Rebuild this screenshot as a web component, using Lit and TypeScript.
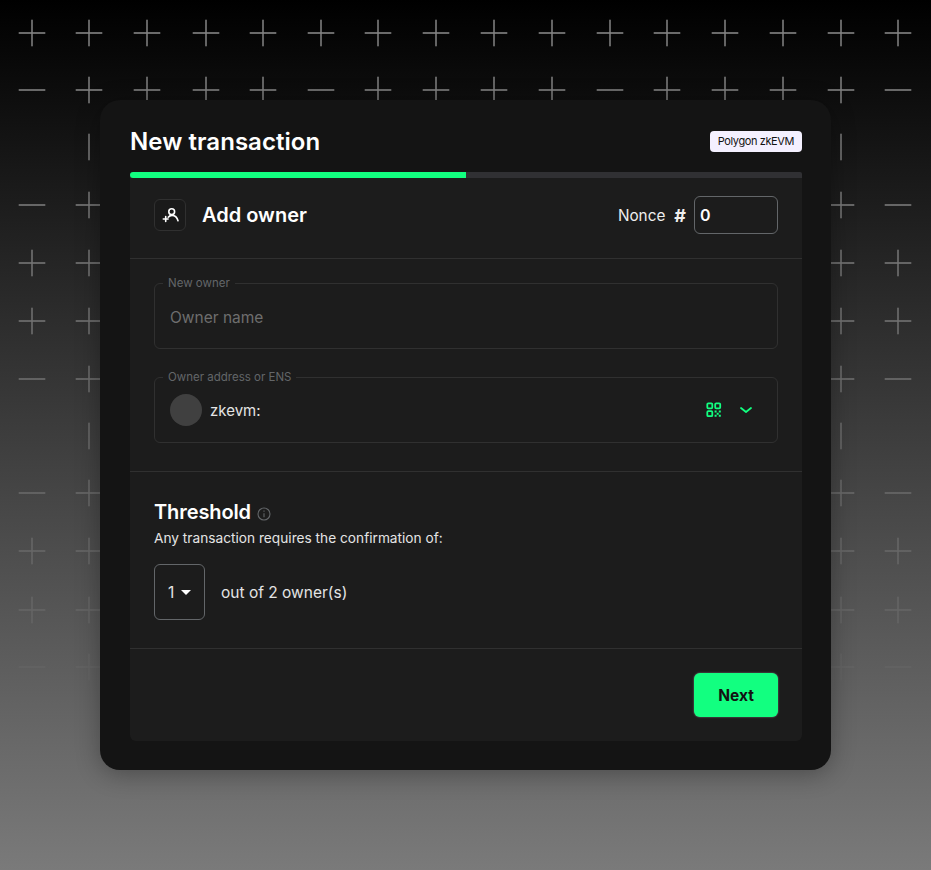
import { LitElement, html, css, svg } from "lit";
import { customElement } from "lit/decorators.js";

const COLS = [32, 89, 147, 206, 263, 321, 378, 436, 494, 552, 610, 667, 725, 783, 841, 898];
const ROWS = [33, 90, 147, 205, 263, 321, 379, 436, 493, 551, 610, 667];
// p = plus, m = horizontal, v = vertical, anything else = nothing, per row
const PATTERN = [
  "pppppppppppppppp",
  "mppppmppppmppppm",
  "nv............vn",
  "mp............pm",
  "pp............pp",
  "pp............pp",
  "mp............pm",
  "nv............vn",
  "mp............pm",
  "pp............pp",
  "pp............pp",
  "mp............pm",
];

@customElement("app-root")
export class AppRoot extends LitElement {
  static styles = css`
    :host {
      display: block;
      position: relative;
      width: 931px;
      height: 870px;
      overflow: hidden;
      background: linear-gradient(180deg, #000 0%, #7a7a7a 100%);
      font-family: "Inter", "Open Sans", sans-serif;
      color: #fff;
    }
    .grid { position: absolute; inset: 0; }
    .page { position: relative; padding: 100px; display: flex; box-sizing: border-box; height: 870px; }
    .card {
      width: 731px; height: 670px; margin-right: -100px; box-sizing: border-box;
      background: #141414; border-radius: 20px; padding: 0 29px 29px 30px;
      box-shadow: 0 4px 24px rgba(0, 0, 0, 0.3);
      display: flex; flex-direction: column;
    }
    .head { height: 72px; flex: none; display: flex; align-items: center; justify-content: space-between; padding-top: 10px; box-sizing: border-box; }
    h1 { margin: 0; font-size: 24px; font-weight: 600; letter-spacing: 0.05px; }
    .chip { background: #f4f0ff; color: #121312; font-size: 11px; letter-spacing: -0.4px; line-height: 21px; height: 21px; padding: 0 8px; border-radius: 4px; }
    .track { height: 6px; flex: none; background: #303033; border-radius: 6px 2px 0 0; }
    .fill { height: 6px; width: 50%; background: #12ff80; border-radius: 6px 0 0 6px; }
    .panel { flex: 1; background: #1c1c1c; border-radius: 0 0 6px 6px; display: flex; flex-direction: column; }
    .row { height: 81px; box-sizing: border-box; border-bottom: 1px solid #303030; padding: 18px 24px 24px; display: flex; align-items: center; flex: none; }
    .ico { width: 32px; height: 32px; box-sizing: border-box; border: 1px solid #303030; border-radius: 6px; display: flex; align-items: center; justify-content: center; background: #1a1a1a; }
    h2 { margin: 0 0 0 16px; font-size: 20px; font-weight: 600; }
    .nonce { margin-left: auto; display: flex; align-items: center; font-size: 15.3px; color: #eee; }
    .hash { font-weight: 700; font-size: 18px; margin: 0 8px 0 9px; }
    .nonce-box { width: 84px; height: 38px; box-sizing: border-box; border: 1px solid #636669; border-radius: 6px; padding-left: 5px; font-weight: 600; font-size: 16px; line-height: 37px; color: #fff; }
    .fields { padding: 18px 24px 28px; border-bottom: 1px solid #303030; display: flex; flex-direction: column; gap: 22px; flex: none; }
    fieldset { margin: 0; padding: 0 15px; height: 72px; box-sizing: border-box; border: 1px solid #303030; border-radius: 6px; min-width: 0; }
    legend { font-size: 11.5px; line-height: 12px; color: #636669; padding: 0 5px; margin-left: -7px; }
    .inner { height: 54px; display: flex; align-items: center; }
    .ph { font-size: 15.5px; color: #6e6e6e; margin-top: 2px; }
    .avatar { width: 32px; height: 32px; border-radius: 50%; background: #404040; margin-right: 8px; }
    .prefix { font-size: 15px; color: #e4e4e4; }
    .qr { margin-left: auto; display: block; }
    .chev { margin-left: 16px; margin-right: 8px; display: block; }
    .thr { padding: 27px 24px 28px; border-bottom: 1px solid #303030; flex: none; }
    .t { display: flex; align-items: center; gap: 6px; font-size: 20px; letter-spacing: -0.1px; font-weight: 600; line-height: 26px; }
    .info { margin-top: 3px; display: block; }
    .sub { font-size: 13.7px; line-height: 20px; color: #e4e4e4; margin-top: 3px; }
    .sel-row { display: flex; align-items: center; margin-top: 16px; font-size: 15.5px; color: #e4e4e4; gap: 16px; }
    .sel { width: 51px; height: 56px; box-sizing: border-box; border: 1px solid #636669; border-radius: 6px; display: flex; align-items: center; padding-left: 13px; gap: 7px; }
    .caret { width: 0; height: 0; border-left: 5px solid transparent; border-right: 5px solid transparent; border-top: 5px solid #fff; }
    .foot { flex: 1; display: flex; justify-content: flex-end; align-items: flex-start; padding: 24px; }
    .next { width: 84px; height: 44px; border: none; box-shadow: 0 0 2px rgba(255, 255, 255, 0.45); border-radius: 6px; background: #12ff80; color: #121312; font: 700 15.5px "Inter", sans-serif; padding: 0; }
  `;

  private renderGrid() {
    const marks: unknown[] = [];
    ROWS.forEach((y, r) => {
      COLS.forEach((x, c) => {
        const k = PATTERN[r][c];
        if (k === "p" || k === "m") marks.push(svg`<rect x=${x - 13.3} y=${y - 0.8} width="26.6" height="1.6" />`);
        if (k === "p" || k === "v") marks.push(svg`<rect x=${x - 0.75} y=${y - 13.3} width="1.5" height="26.6" />`);
      });
    });
    return html`<svg class="grid" width="931" height="870">
      <defs>
        <linearGradient id="fade" gradientUnits="userSpaceOnUse" x1="0" y1="0" x2="0" y2="870">
          <stop offset="0" stop-color="#858585" />
          <stop offset="0.5" stop-color="#6a6a6a" />
          <stop offset="0.77" stop-color="#636363" />
        </linearGradient>
      </defs>
      <g fill="url(#fade)">${marks}</g>
    </svg>`;
  }

  render() {
    return html`
      ${this.renderGrid()}
      <div class="page">
        <section class="card">
          <header class="head"><h1>New transaction</h1><span class="chip">Polygon zkEVM</span></header>
          <div class="track"><div class="fill"></div></div>
          <div class="panel">
            <div class="row">
              <span class="ico">
                <svg width="20" height="20" viewBox="0 0 20 20" fill="none" stroke="#fff" stroke-width="1.6" stroke-linecap="round">
                  <circle cx="11.7" cy="6.7" r="2.9" />
                  <path d="M8.2 12.2C9.2 11 10.4 10.4 12 10.4c3 0 5.2 2.2 6 5.4" />
                  <path d="M3.3 14h4.8M5.7 11.6v4.8" />
                </svg>
              </span>
              <h2>Add owner</h2>
              <div class="nonce"><span>Nonce</span><span class="hash">#</span><div class="nonce-box">0</div></div>
            </div>
            <div class="fields">
              <fieldset><legend>New owner</legend><div class="inner"><span class="ph">Owner name</span></div></fieldset>
              <fieldset>
                <legend>Owner address or ENS</legend>
                <div class="inner">
                  <span class="avatar"></span><span class="prefix">zkevm:</span>
                  <svg class="qr" width="16" height="16" viewBox="0 0 16 16" fill="none" stroke="#12ff80" stroke-width="1.8">
                    <rect x="1.3" y="1.3" width="5" height="5" rx="1" />
                    <rect x="9.2" y="1.3" width="5" height="5" rx="1" />
                    <rect x="1.3" y="9.2" width="5" height="5" rx="1" />
                    <path d="M8.6 8.6h2v2h-2zM12.8 8.6h2v2h-2zM10.7 10.7h2v2h-2zM8.6 12.8h2v2h-2zM12.8 12.8h2v2h-2z" fill="#12ff80" stroke="none" />
                  </svg>
                  <svg class="chev" width="16" height="16" viewBox="0 0 16 16" fill="none" stroke="#12ff80" stroke-width="1.8" stroke-linecap="round" stroke-linejoin="round">
                    <path d="M3 6l5 4 5-4" />
                  </svg>
                </div>
              </fieldset>
            </div>
            <div class="thr">
              <div class="t">Threshold
                <svg class="info" width="14" height="14" viewBox="0 0 14 14" fill="none" stroke="#636669" stroke-width="1.1">
                  <circle cx="7" cy="7" r="6" />
                  <path d="M7 6.2v4M7 3.6v1.2" />
                </svg>
              </div>
              <div class="sub">Any transaction requires the confirmation of:</div>
              <div class="sel-row">
                <div class="sel"><span>1</span><span class="caret"></span></div>
                <span>out of 2 owner(s)</span>
              </div>
            </div>
            <div class="foot"><button class="next">Next</button></div>
          </div>
        </section>
      </div>
    `;
  }
}
